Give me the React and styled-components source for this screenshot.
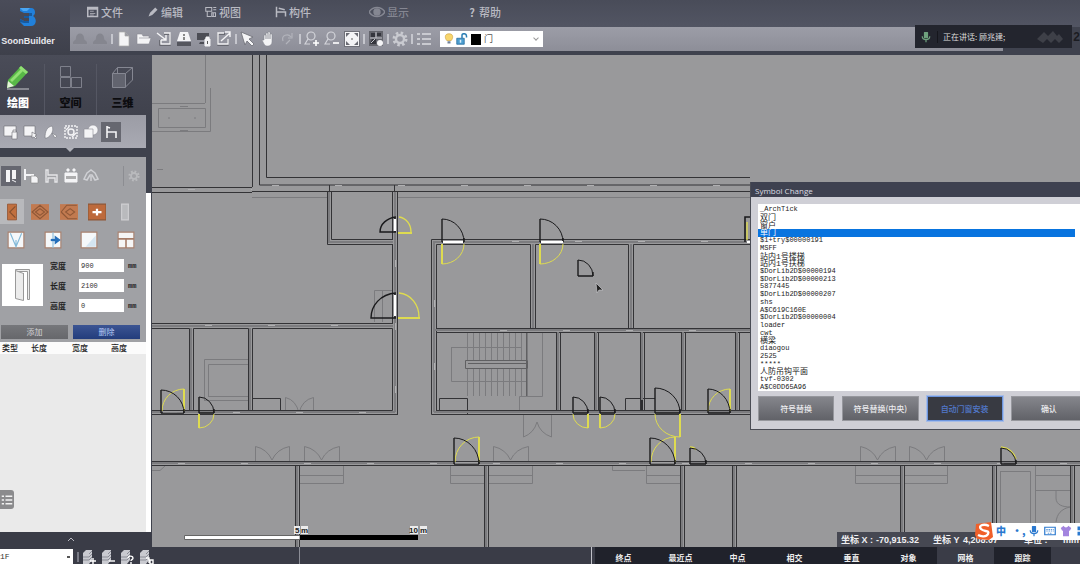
import styled, { createGlobalStyle } from "styled-components";

const cjk = `"Noto Sans CJK SC", sans-serif`;

const GlobalStyle = createGlobalStyle`
  * {
    box-sizing: border-box;
  }

  body {
    margin: 0;
    overflow: hidden;
    background: #3a3c47;
    font-family: "Liberation Sans", ${cjk};
  }

  button, input, select {
    margin: 0;
    padding: 0;
    border: 0;
    border-radius: 0;
    background: none;
    color: inherit;
    font: inherit;
  }
`;

const white = "#f4f4f6";
const edge = "#6b6c74";

/* every glyph is drawn on a 16 x 16 grid */
const glyphs = {
  undo: <path d="M1 12c0-3 3-2 3-5 0-6 8-6 8 0 0 3 3 2 3 5v1H1z" fill="#85868f" />,
  file: <path d="M3 1h6l4 4v10H3zM9 1v4h4" fill={white} stroke="#aaa" strokeWidth=".7" />,
  folder: <path d="M1 13V3h5l1 2h6v2h2l-2 6zM3 7h10" fill={white} stroke="#8b8c94" strokeWidth=".6" />,
  importIn: (
    <g fill="none" stroke={white} strokeWidth="1.4">
      <path d="M8 3h6v11H4V9" stroke="#5b5c64" />
      <path d="M8 2h6v11H5V9M1 2l9 7M10 4v5H5" />
    </g>
  ),
  scan: (
    <g>
      <path d="M4 1h8l3 9H1z" fill={white} />
      <path d="M1 11h14v4H1z" fill="#55565e" />
      <path d="M7 3h2v2H7zM7 6h2v3H7z" fill="#888" />
    </g>
  ),
  screenLock: (
    <g>
      <path d="M1 2h12v7H1z" fill="#4c4d55" />
      <path d="M4 11h4v2H3z" fill="#4c4d55" />
      <path d="M9 8h5v7H9zM10 8V6h3v2" fill={white} stroke={white} />
      <path d="M11 10h1v3h-1z" fill="#555" />
    </g>
  ),
  exportOut: (
    <g fill="none" stroke={white} strokeWidth="1.4">
      <path d="M9 3H2v11h10V8" stroke="#5b5c64" />
      <path d="M8 2H2v11h10V8M5 10l9-8M9 1h5v5" />
    </g>
  ),
  pointer: <path d="M1 1l12 5-4 2 5 5-2 2-5-5-2 4z" fill={white} stroke={edge} strokeWidth=".8" />,
  hand: (
    <path d="M4 9V4h2v4V2h2v6V1h2v7V3h2v8c0 5-7 5-8 2L2 9z" fill={white} stroke="#83848c" strokeWidth=".5" />
  ),
  rotate: (
    <g fill="none" stroke="#b2b3bb" strokeWidth="1.2">
      <path d="M3 10c-2-6 5-8 8-4M12 2v5H8M6 13l4-4" />
    </g>
  ),
  zoomIn: (
    <g fill="none" stroke="#d3d4da" strokeWidth="1.2">
      <circle cx="7" cy="5" r="4" />
      <path d="M4 8l-3 5h5" />
      <path d="M12 9v6M9 12h6" stroke="#fff" strokeWidth="1.6" />
    </g>
  ),
  zoomOut: (
    <g fill="none" stroke="#d3d4da" strokeWidth="1.2">
      <circle cx="7" cy="5" r="4" />
      <path d="M4 8l-3 5h5" />
      <path d="M9 12h6" stroke="#fff" strokeWidth="1.6" />
    </g>
  ),
  fit: (
    <g>
      <path d="M0 0h16v16H0z" fill="#707179" />
      <path d="M1 1h14v14H1z" fill={white} />
      <path d="M2 2h4L2 6zM14 2v4l-4-4zM2 14v-4l4 4zM14 14h-4l4-4z" fill="#6a6b73" />
      <path d="M7 7h2v2H7z" fill="#aaa" />
    </g>
  ),
  snapGrid: (
    <g>
      <path d="M1 0h14v15H1z" fill="#62636b" />
      <path d="M3 2h4v4H3zM9 2h4v3H9zM4 8h4v5H2z" fill="#34353d" />
      <path d="M2 7h12M8 1v6M3 12l4-4" stroke="#c4c5cc" />
      <circle cx="12" cy="12" r="3" fill={white} />
    </g>
  ),
  gear: (
    <g>
      <circle cx="8" cy="8" r="6" fill="none" stroke="currentColor" strokeWidth="3" strokeDasharray="2.4 2.3" />
      <circle cx="8" cy="8" r="4" fill="none" stroke="currentColor" strokeWidth="2.4" />
    </g>
  ),
  list: (
    <g stroke="currentColor" strokeWidth="2">
      <path d="M6 3h9M6 8h9M6 13h9M1 3h3M1 8h3M1 13h3" />
    </g>
  ),
  menuFile: (
    <g fill="none" stroke="currentColor">
      <path d="M1 2h13v12H1zM1 4h13" strokeWidth="2" />
      <path d="M4 7h5M4 10h7M4 12h5" />
    </g>
  ),
  menuEdit: <path d="M2 14l2-5 7-7 3 3-7 7zM8 10l5 4" fill="currentColor" />,
  menuView: (
    <g fill="none" stroke="currentColor" strokeWidth="1.4">
      <path d="M1 2h8v5H1zM11 2h4M11 5h4M3 7v7h5M9 9h5v5H9zM11 9v5" />
    </g>
  ),
  menuPart: <path d="M2 1v14M2 8h12v6M5 3l8 2" fill="none" stroke="currentColor" strokeWidth="2" />,
  eye: (
    <g fill="none" stroke="currentColor" strokeWidth="1.4">
      <path d="M0 8c4-6 12-6 16 0-4 6-12 6-16 0z" />
      <circle cx="8" cy="8" r="3" fill="currentColor" />
    </g>
  ),
  wallAdd: (
    <g fill={white} stroke={edge} strokeWidth=".6">
      <path d="M1 2h12v10H1z" />
      <path d="M9 8h5v7H9zM10 8V6h3v2" />
    </g>
  ),
  wallPick: (
    <g fill={white} stroke={edge} strokeWidth=".6">
      <path d="M1 2h11v10H1z" />
      <path d="M9 8l5 3-2 1 2 2-1 1-2-2-2 1z" />
    </g>
  ),
  leaf: (
    <g fill={white} stroke="#77787f" strokeWidth=".6">
      <path d="M2 14C2 7 4 3 9 2c2 4 0 9-5 12z" />
      <path d="M9 9l5 3-2 2z" />
    </g>
  ),
  hatch: (
    <g fill="none" stroke={white} strokeWidth="1.4">
      <path d="M2 2h12v12H2z" strokeDasharray="2 1" />
      <circle cx="8" cy="8" r="3" />
      <path d="M3 6l3-3M9 13l4-4" />
    </g>
  ),
  merge: (
    <g fill={white} stroke="#8b8c94" strokeWidth=".6">
      <circle cx="10" cy="6" r="5" />
      <path d="M1 5h9v9H1z" />
    </g>
  ),
  chair: <path d="M4 2v12M4 8h9v6M7 4l-3-1" fill="none" stroke={white} strokeWidth="1.6" />,
  chairCopy: (
    <g>
      <path d="M2 1v11M2 7h9" fill="none" stroke={white} strokeWidth="2" />
      <path d="M8 8h5l2 2v5H8z" fill={white} stroke="#888" strokeWidth=".6" />
    </g>
  ),
  chairLine: (
    <g fill="none" stroke="#e5e5e8" strokeWidth="1.4">
      <path d="M3 2v12h2v-4h7v4h2V7H5V2z" />
    </g>
  ),
  doors: (
    <g>
      <path d="M3 2h4v12H3z" fill={white} />
      <path d="M9 2h4v9H9z" fill={white} />
      <path d="M9 12l4 2" stroke={white} />
    </g>
  ),
  machine: (
    <g>
      <path d="M2 5h12v9H2zM4 1h2v2H4zM10 1h2v2h-2z" fill={white} stroke={white} />
      <path d="M4 8v3M6 8v3M8 8v3M10 8v3M12 8v3" stroke="#666" />
    </g>
  ),
  arcRail: (
    <g fill="none" stroke="#cfd0d4" strokeWidth="1.5">
      <path d="M1 11l3-6 4-3 4 3 3 6-3 1-3-5H7l-3 5zM8 8v5" />
    </g>
  ),
  doorLeaf: (
    <g>
      <path d="M4 1h8v14H4z" fill="#c1703f" stroke="#915330" strokeWidth=".7" />
      <path d="M11 3L6 8l5 5" fill="none" stroke="#85502f" />
    </g>
  ),
  doorSquare: (
    <g>
      <path d="M0 1h16v14H0z" fill="#c27a50" />
      <path d="M1 8l7-6 7 6-7 6zM4 8l4-3 4 3-4 3z" fill="none" stroke="#8f5736" />
    </g>
  ),
  doorSlide: (
    <g>
      <path d="M0 1h16v14H0z" fill="#c27a50" />
      <path d="M1 8l5-6h9M1 8l6 6h8M5 8l4-3 4 3-4 3z" fill="none" stroke="#8f5736" />
    </g>
  ),
  doorPlus: (
    <g>
      <path d="M0 1h16v14H0z" fill="#bd6a3c" stroke="#8f5736" />
      <path d="M8 5v6M4 8h8" stroke="#fff" strokeWidth="2" />
    </g>
  ),
  column: <path d="M5 1h6v14H5z" fill="#b9babd" stroke="#cfcfd2" />,
  winV: (
    <g>
      <path d="M1 1h14v14H1z" fill="#f5f8fa" stroke="#a98270" />
      <path d="M3 2l5 12 5-12M8 14V8" fill="none" stroke="#83b9d8" />
    </g>
  ),
  winPlus: (
    <g>
      <path d="M1 1h14v14H1z" fill="#f5f8fa" stroke="#a98270" />
      <path d="M8 1v14" stroke="#8abedb" />
      <path d="M10 5v6l4-3z" fill="#256fba" stroke="#256fba" />
      <path d="M6 8h6" stroke="#256fba" strokeWidth="2" />
    </g>
  ),
  winPlain: (
    <g>
      <path d="M1 1h14v14H1z" fill="#f5f8fa" stroke="#a98270" />
      <path d="M14 4v10H5z" fill="#d4e5f1" />
    </g>
  ),
  winPanes: (
    <g>
      <path d="M1 1h14v14H1z" fill="#f5f5f5" stroke="#a98270" />
      <path d="M1 7h14M8 7v8" stroke="#a57c68" strokeWidth="1.4" />
    </g>
  ),
  bulb: (
    <g>
      <path d="M8 1c7 0 5 7 3 9H5C3 8 1 1 8 1z" fill="#f8d66d" stroke="#c79b36" strokeWidth=".8" />
      <path d="M6 11h4v3H6z" fill="#70809a" />
    </g>
  ),
  unlock: (
    <g>
      <path d="M1 7h10v8H1z" fill="#4d9ed0" stroke="#23699b" />
      <path d="M8 7V3c0-3 6-3 6 1v2" fill="none" stroke="#2d7fb5" strokeWidth="2" />
      <path d="M5 9h2v4H5z" fill="#d9eefa" />
    </g>
  ),
  mic: (
    <g fill="none" stroke="currentColor" strokeWidth="1.6">
      <path d="M6 2h4v7H6z" fill="currentColor" strokeLinejoin="round" />
      <path d="M3 7c0 6 10 6 10 0M8 12v3" />
    </g>
  ),
  keyboard: (
    <g>
      <path d="M1 3h14v10H1z" fill="none" stroke="#2b79cf" strokeWidth="1.6" />
      <path d="M3 6h10M3 8h10M5 11h6" stroke="#2b79cf" strokeDasharray="2 1" />
    </g>
  ),
  shirt: <path d="M1 4l4-3c1 3 5 3 6 0l4 3-2 4-1-1v8H4V7L3 8z" fill="#a384df" />,
  apps: <path d="M2 2h5v5H2zM9 2h5v5H9zM2 9h5v5H2zM9 9h5v5H9z" fill="#2b79cf" />,
};

const floorMarks = {
  add: <path d="M12 9v6M9 12h6" />,
  remove: <path d="M9 12h6" />,
  ask: <path d="M9 9c1-3 5-2 5 0s-2 1-2 3M12 13v2" />,
  copy: <path d="M8 9h3v5M12 11h3v4h-3z" />,
};

const Icon = ({ name, size = 16 }) => (
  <svg width={size} height={size} viewBox="0 0 16 16" aria-hidden="true">
    {glyphs[name]}
  </svg>
);

const FloorIcon = ({ mark }) => (
  <svg width="16" height="16" viewBox="0 0 16 16" aria-hidden="true">
    <path d="M2 4l3-3h6v10l-3 4H2z" fill="#c9cad0" />
    <path d="M8 5l3-3M2 8h6l3-3M2 11h6l3-3" fill="none" stroke="#8b8d96" />
    <g fill="none" stroke="#fff" strokeWidth="1.4">{floorMarks[mark]}</g>
  </svg>
);

const menus = [
  ["menuFile", "文件"],
  ["menuEdit", "编辑"],
  ["menuView", "视图"],
  ["menuPart", "构件"],
  ["eye", "显示"],
  [null, "帮助"],
];

const toolGroups = [
  ["undo", "undo"],
  ["file", "folder", "importIn", "scan", "screenLock", "exportOut"],
  ["pointer", "hand", "rotate"],
  ["zoomIn", "zoomOut", "fit"],
  ["snapGrid"],
  ["gear"],
  ["list"],
];

const symbols = [
  "_ArchTick", "双门", "窗户", "单门", "$1+try$00000191", "MSFF", "站内1号楼梯", "站内1号扶梯",
  "$DorLib2D$00000194", "$DorLib2D$00000213", "5877445", "$DorLib2D$00000207", "shs",
  "A$C619C160E", "$DorLib2D$00000004", "loader", "cwt", "横梁", "diaogou", "2525", "*****",
  "人防吊钩平面", "tvf-0302", "A$C0DD65A96",
];

const snaps = ["终点", "最近点", "中点", "相交", "垂直", "对象", "网格", "跟踪"];

/* hinge x, top y, closing x, base y */
const blackDoors = [
  [161, 390, 184, 413], [199, 397, 214, 413], [442, 219, 464, 242], [540, 219, 563, 242],
  [578, 260, 593, 276], [573, 397, 588, 413], [600, 397, 615, 413], [655, 388, 680, 413],
  [708, 389, 730, 413], [454, 438, 479, 464], [650, 438, 675, 464], [690, 448, 706, 464],
  [1001, 448, 1016, 464],
];

const yellowDoors = [
  [184, 389, 162, 411], [199, 428, 214, 414], [442, 264, 464, 244], [540, 264, 563, 244],
  [588, 428, 573, 414], [600, 428, 615, 414], [680, 437, 655, 414], [730, 389, 708, 411],
  [479, 437, 455, 462], [675, 437, 651, 462],
];

const swing = ([x, top, closeX, base]) => {
  const clockwise = (closeX > x) === (base > top) ? 1 : 0;
  return `M${x} ${top}A${Math.abs(closeX - x)} ${Math.abs(base - top)} 0 0 ${clockwise} ${closeX} ${base}`;
};

const doubleDoors = [[255, 289], [304, 339], [493, 528], [860, 895], [909, 944]];

const steps = [[450, 484], [488, 532], [299, 343], [646, 680], [855, 900], [904, 947]];

const lowerWalls = [[295, 299], [484, 488], [680, 684], [732, 736], [900, 904], [992, 996], [1070, 1074]];

const roomWalls = [[556, 560], [594, 598], [640, 644], [681, 685], [735, 739]];

const Plan = () => (
  <PlanSvg viewBox="152 55 928 492" preserveAspectRatio="xMinYMin slice" role="img" aria-label="平面图">
    <g fill="none" stroke="#7b7b7e" strokeWidth="1">
      <path d="M205.500 55V103M152 103.500H205M158.500 108.500H205.500V127.500H158.500zM210.500 88V131.500H152M168 118h2M194 118h2M157 169.500h6M180 106.500h8M180 130.500h8" />
      <path d="M252 197.500H327M398 197.500H750M204.500 400V359.500H248M208.500 396V364.500H248M204 400.500H248M208 396.500H248" />
      <path d="M374.500 322V290.500H393M382.500 290V322M451.500 347.500H522M451.500 347V381.500H526M542.500 333V396.500H519.500V412" />
      <path d="M465.500 360.500H527.500V368.500H465.500zM468 363.500H526M526.500 333V396" stroke="#606062" />
      {Array.from({ length: 11 }, (_, i) => (
        <path key={i} d={`M${467.5 + i * 6} 333V360M${467.5 + i * 6} 369V396`} />
      ))}
      <path d="M285.500 413V397.500Q296 400 299 413Q302 400 313.500 397.500V413M523.500 415V437Q534 433 537 422Q540 433 551.500 437V415" />
      {doubleDoors.map(([a, b]) => {
        const mid = (a + b) / 2;
        return (
          <path key={a} d={`M${a}.500 462V446.500Q${mid - 5} 449 ${mid} 460Q${mid + 5} 449 ${b}.500 446.500V462`} />
        );
      })}
      {steps.map(([a, b]) => (
        <path key={a} d={`M${a} 475.500H${b}M${a}.500 466V483.500H${b}.500V466`} />
      ))}
      <path d="M612.500 466V470.500H645M1000.500 471.500H1030.500V523M1000.500 471V523M1035.500 466V540M1035 475.500H1070M1035 490.500H1070M1056 490V498C1056 505 1063 507 1070 507C1061 509 1057 514 1056 522M152 470.500H160L165 466" />
    </g>

    <g fill="none" stroke="#333336" strokeWidth="1">
      <path d="M252.500 55V187M259.500 55V185H750M266.500 55V177.500H750M252 191.500H750M152 187.500H252M152 192.500H252" />
      <path d="M329.500 185V192M394.500 185V192M327.500 192V244.500H393M331.500 192V239.500H393M392.500 192V239M392.500 244V323M397.500 192V414.500" />
      <path d="M152 323.500H393M152 328.500H189.500V410M193.500 410V328.500H248.500V410M252.500 410V328.500H392.500V410.500H152M152 414.500H398M252 398.500H280.500V410" />
      <path d="M750 239.500H431.500V414.500H750M436.500 410V244.500H530.500V328M535.500 328V244.500H628.500V328M633.500 328V244.500H750M436 328.500H750M436 332.500H750M436 410.500H750" />
      {roomWalls.map(([a, b]) => (
        <path key={a} d={`M${a}.500 332V410M${b}.500 332V410`} />
      ))}
      <path d="M439.500 410V398.500H467.500V414M625.500 410V398.500H655M152 461.500H1080M152 465.500H1080" />
      {lowerWalls.map(([a, b]) => (
        <path key={a} d={`M${a}.500 466V547M${b}.500 466V547`} />
      ))}
    </g>

    <g fill="none" stroke="#7c7c7f" strokeWidth="2">
      <path d="M329 192V242H393M395 192V412M152 326H393M191 328V410M250 328V410M152 412H395M434 412V242H750M434 330H750M434 412H750M533 244V328M631 244V328M152 463H1080" />
      {roomWalls.map(([a]) => (
        <path key={a} d={`M${a + 2} 332V410`} />
      ))}
      {lowerWalls.map(([a]) => (
        <path key={a} d={`M${a + 2} 466V547`} />
      ))}
    </g>
    <g fill="none" stroke="#b0b0b2" strokeWidth="1" strokeDasharray="7 56">
      <path d="M188 189.500H252M272 185.500H750M205 325.500H392M170 412.500H392M512 241.500H750M500 330.500H750M178 463.500H1080M395.500 260V410M434.500 300V410" />
    </g>

    <g fill="none" stroke="#dedb50">
      {yellowDoors.map((door) => (
        <g key={door.join()}>
          <path d={swing(door)} strokeWidth="1" />
          <path d={`M${door[0]} ${door[1]}V${door[3]}`} strokeWidth="2" />
        </g>
      ))}
      <path d="M399 217C406 218 411 224 411 232M399 293C411 294 419 305 419 317M747 222V240" strokeWidth="1.400" />
      <path d="M398 233H412M398 318H420" strokeWidth="2" />
      <path d="M690 447C693 447 695 448 696 450M1001 447C1009 448 1014 453 1016 459" strokeWidth="1.400" />
    </g>

    <g fill="none" stroke="#1a1a1c">
      {blackDoors.map((door) => (
        <g key={door.join()}>
          <path d={swing(door)} strokeWidth="1" />
          <path d={`M${door[0]} ${door[1]}V${door[3]}`} strokeWidth="1.400" />
          <path d={`M${door[0]} ${door[3]}H${door[2]}M${door[2]} ${door[3] - 4}v4`} strokeWidth="1.400" />
        </g>
      ))}
      <path d="M396 217C387 218 380 224 380 232H396M396 293C380 294 371 306 371 318H396M395 217V232M395 293V318" strokeWidth="1.400" />
      <path d="M750 217H745V242M642 400V410" strokeWidth="1.600" />
    </g>
    <g stroke="#fff" strokeWidth="2">
      <path d="M443 242H463M541 242H563M395 219V231M395 295V316M747 242H750" />
      <path d="M163 412H183M455 463H478M651 463H674" stroke="#c4c4c6" strokeWidth="1" />
    </g>
    <path d="M596 283l7 7-4 0-2 3z" fill="#222" stroke="#c6c6c8" strokeWidth=".7" />
    <g>
      <path d="M184.500 535.500H300V539.500H184.500z" fill="#fff" stroke="#666" />
      <path d="M300 535H418V540H300z" />
      <path d="M294 526h6v8h-6zM301 526h7v8h-7zM410 526h8v8h-8zM420 526h7v8h-7z" fill="#ececec" />
      <g fontFamily="Liberation Sans" fontSize="8" fontWeight="700" fill="#222">
        <text x="295" y="533">5</text>
        <text x="301" y="533">m</text>
        <text x="409" y="533">10</text>
        <text x="420" y="533">m</text>
      </g>
    </g>
  </PlanSvg>
);

const Header = () => (
  <HeaderBar>
    <Brand>
      <svg width="18" height="20" viewBox="0 0 18 20" aria-hidden="true">
        <path d="M1 1h11c5 0 5 7 2 8 4 2 4 10-2 10H5l-4-4v-3l4 2h5v-3H5V9h5V6H5L1 4z" fill="#2180da" />
        <path d="M1 12l4 2h5v2H5l-4-1zM5 9h5v2H5zM10 6h3v3h-3z" fill="#175a9f" />
        <path d="M1 1h10L8 4H4z" fill="#4ba6f2" />
      </svg>
      <BrandName>SoonBuilder</BrandName>
    </Brand>
    <HeaderMain>
      <MenuBar>
        {menus.map(([icon, label]) => (
          <MenuButton key={label} $dim={icon === "eye"}>
            {icon ? <Icon name={icon} size={icon === "eye" ? 16 : 12} /> : <HelpMark>?</HelpMark>}
            {label}
          </MenuButton>
        ))}
      </MenuBar>
      <ToolBar>
        {toolGroups.map((group, i) => (
          <ToolGroup key={i}>
            {group.map((name, j) => (
              <ToolButton key={j} aria-label={name}>
                <Icon name={name} />
              </ToolButton>
            ))}
          </ToolGroup>
        ))}
        <LayerBox>
          <Icon name="bulb" size={12} />
          <Icon name="unlock" size={12} />
          <Swatch />
          <LayerSelect aria-label="图层">
            <option>门</option>
          </LayerSelect>
          <Chevron />
        </LayerBox>
      </ToolBar>
      <Speaker>
        <Mic><Icon name="mic" size={12} /></Mic>
        正在讲话: 顾兆建;
        <svg width="28" height="14" viewBox="0 0 28 14" aria-hidden="true">
          <path d="M1 9l7-7 4 4 5-5 4 5 2-2 4 5-4 4-4-4-4 4-4-4-4 4z" fill="#3e4048" />
        </svg>
      </Speaker>
      <Count>2</Count>
    </HeaderMain>
  </HeaderBar>
);

const Modes = () => (
  <ModeBar>
    <ModeButton $active>
      <svg width="26" height="26" viewBox="0 0 26 26" aria-hidden="true">
        <path d="M3 16L16 2l7 6-13 14-8 2z" fill="#58b847" />
        <path d="M5 16L17 4l2 2L7 18zM16 2l7 6-2 2-7-6z" fill="#91df73" />
        <path d="M3 17l6 5-7 2z" fill="#e5f3d9" />
        <path d="M2 25h22" stroke="#c9cacf" />
      </svg>
      绘图
    </ModeButton>
    <ModeButton>
      <svg width="26" height="26" viewBox="0 0 26 26" fill="none" stroke="#7e808b" aria-hidden="true">
        <path d="M2.500 2.500h10v10h-10zM2.500 13.500h10v10h-10zM13.500 13.500h10v10h-10z" />
      </svg>
      空间
    </ModeButton>
    <ModeButton>
      <svg width="26" height="26" viewBox="0 0 26 26" aria-hidden="true">
        <path d="M2.500 9.500h13v14h-13z" fill="#62646f" stroke="#858792" />
        <path d="M7.500 9V3.500h15V16l-7 7M15.500 9.500l7-6M2.500 9.500l5-6" fill="none" stroke="#858792" />
      </svg>
      三维
    </ModeButton>
  </ModeBar>
);

const SidePanel = () => (
  <Side>
    <Modes />
    <ToolStrip>
      {["wallAdd", "wallPick", "leaf", "hatch", "merge", "chair"].map((name) => (
        <StripButton key={name} $active={name === "chair"} aria-label={name}>
          <Icon name={name} />
        </StripButton>
      ))}
    </ToolStrip>
    <SideBody>
      <Column>
        <Properties>
          <KindRow>
            {["doors", "chairCopy", "chairLine", "machine", "arcRail"].map((name) => (
              <StripButton key={name} $active={name === "doors"} aria-label={name}>
                <Icon name={name} />
              </StripButton>
            ))}
            <GearButton aria-label="设置"><Icon name="gear" size={12} /></GearButton>
          </KindRow>
          <DoorRow>
            {["doorLeaf", "doorSquare", "doorSlide", "doorPlus", "column"].map((name) => (
              <DoorButton key={name} $active={name === "doorLeaf"} aria-label={name}>
                <Icon name={name} size={18} />
              </DoorButton>
            ))}
          </DoorRow>
          <WindowRow>
            {["winV", "winPlus", "winPlain", "winPanes"].map((name) => (
              <DoorButton key={name} aria-label={name}>
                <Icon name={name} size={18} />
              </DoorButton>
            ))}
          </WindowRow>
          <SizeForm>
            <Preview>
              <svg width="20" height="34" viewBox="0 0 20 34" fill="#ececec" stroke="#999" aria-hidden="true">
                <path d="M2.500 1.500h14v30h-2V3.500h-12z" />
                <path d="M2.500 2.500l8 3v27l-8-2zM10.500 5v25" />
              </svg>
            </Preview>
            <Fields>
              {[["宽度", "900"], ["长度", "2100"], ["高度", "0"]].map(([label, value]) => (
                <Field key={label}>
                  <FieldName>{label}</FieldName>
                  <FieldInput defaultValue={value} />
                  <Unit>mm</Unit>
                </Field>
              ))}
            </Fields>
          </SizeForm>
          <ActionRow>
            <ActionButton>添加</ActionButton>
            <ActionButton $primary>删除</ActionButton>
          </ActionRow>
        </Properties>
        <SizeTable>
          <thead>
            <tr>
              <HeadCell $w="29px">类型</HeadCell>
              <HeadCell $w="41px">长度</HeadCell>
              <HeadCell $w="39px">宽度</HeadCell>
              <HeadCell>高度</HeadCell>
            </tr>
          </thead>
        </SizeTable>
        <EmptyList>
          <DrawerButton aria-label="列表"><Icon name="list" size={12} /></DrawerButton>
        </EmptyList>
      </Column>
      <ScrollTrack />
    </SideBody>
    <Collapse aria-label="收起">
      <svg width="8" height="5" viewBox="0 0 8 5" fill="none" stroke="#b9bac2" aria-hidden="true">
        <path d="M1 4l3-3 3 3" />
      </svg>
    </Collapse>
  </Side>
);

const SymbolDialog = () => (
  <Dialog role="dialog" aria-label="Symbol Change">
    <DialogTitle>Symbol Change</DialogTitle>
    <DialogBody>
      <SymbolList role="listbox" aria-label="Symbol">
        {symbols.map((name) => (
          <SymbolRow
            key={name}
            role="option"
            aria-selected={name === "单门"}
            $selected={name === "单门"}
            $large={/[\u4e00-\u9fff]/.test(name)}
          >
            {name}
          </SymbolRow>
        ))}
      </SymbolList>
      <DialogActions>
        <DialogButton>符号替换</DialogButton>
        <DialogButton>符号替换(中央)</DialogButton>
        <DialogButton $focused>自动门窗安装</DialogButton>
        <DialogButton>确认</DialogButton>
      </DialogActions>
    </DialogBody>
  </Dialog>
);

const App = () => (
  <Page>
    <GlobalStyle />
    <Header />
    <Workspace>
      <SidePanel />
      <Canvas>
        <Plan />
        <SymbolDialog />
        <Coordinates>
          <span>坐标 X :</span>
          <span>-70,915.32</span>
          <span>坐标 Y</span>
          <span>4,208.07</span>
          <span>单位 :</span>
          <span>mm</span>
        </Coordinates>
        <InputBar>
          <svg width="20" height="20" viewBox="0 0 20 20" aria-hidden="true">
            <path d="M2 3l15-2 2 15-4 3-12-1-2-4z" fill="#f0602a" />
            <path d="M15 5C9 2 4 5 7 8s9 1 7 5-8 2-10 1" fill="none" stroke="#fff" strokeWidth="2.400" />
          </svg>
          <InputKeys>
            <b>中</b>
            <b>•,</b>
            <Icon name="mic" size={12} />
            <Icon name="keyboard" size={12} />
            <Icon name="shirt" size={12} />
            <Icon name="apps" size={12} />
          </InputKeys>
        </InputBar>
      </Canvas>
    </Workspace>
    <StatusBar>
      <FloorTools>
        <FloorSelect aria-label="楼层">
          <option>1F</option>
        </FloorSelect>
        <Divider />
        {Object.keys(floorMarks).map((mark) => (
          <FloorButton key={mark} aria-label={mark}><FloorIcon mark={mark} /></FloorButton>
        ))}
      </FloorTools>
      <Message />
      <SnapBar>
        {snaps.map((name) => (
          <SnapButton key={name} $on={name === "网格"}>{name}</SnapButton>
        ))}
      </SnapBar>
    </StatusBar>
  </Page>
);

export default App;

const Page = styled.div`
  display: flex;
  flex-direction: column;
  height: 100vh;
  overflow: hidden;
`;

const HeaderBar = styled.header`
  display: flex;
  flex: none;
  height: 55px;
  background: #3f424e;
`;

const Brand = styled.div`
  display: flex;
  flex-direction: column;
  align-items: center;
  width: 70px;
  padding: 7px 14px 0 0;
  background: linear-gradient(#4a4c59, #3e404b);
`;

const BrandName = styled.span`
  margin-top: 8px;
  color: #e9e9ed;
  font: 700 9px/12px "Liberation Sans", sans-serif;
`;

const HeaderMain = styled.div`
  position: relative;
  display: flex;
  flex: 1;
  flex-direction: column;
`;

const MenuBar = styled.nav`
  display: grid;
  grid-template-columns: 60px 58px 70px 94px 98px auto;
  justify-content: start;
  height: 27px;
  padding: 0 0 4px 17px;
  background: linear-gradient(#494c59, #525563);
`;

const MenuButton = styled.button`
  display: flex;
  align-items: center;
  gap: 2px;
  color: ${({ $dim }) => ($dim ? "#858792" : "#b9bac2")};
  font: 500 11px/16px ${cjk};
`;

const HelpMark = styled.span`
  width: 10px;
  font-weight: 700;
`;

const ToolBar = styled.div`
  display: flex;
  align-items: center;
  height: 24px;
  margin-right: 77px;
  background: linear-gradient(#9c9da7, #8d8e98);
`;

const ToolGroup = styled.div`
  display: flex;

  & + &::before {
    content: "";
    width: 2px;
    height: 10px;
    margin: 3px 1px;
    background: #c5c6cd;
  }
`;

const ToolButton = styled.button`
  display: grid;
  place-items: center;
  width: 20px;
  height: 16px;
  color: #c9cad0;
`;

const LayerBox = styled.div`
  display: flex;
  align-items: center;
  gap: 1px;
  width: 103px;
  height: 16px;
  margin-left: 6px;
  padding: 0 5px 0 3px;
  background: #fff;
`;

const Swatch = styled.span`
  width: 10px;
  height: 11px;
  margin: 0 2px;
  background: #000;
`;

const LayerSelect = styled.select`
  flex: 1;
  appearance: none;
  color: #555;
  font: 9px/16px ${cjk};
`;

const Chevron = styled.span`
  width: 4px;
  height: 4px;
  margin-bottom: 2px;
  border: solid #999;
  border-width: 0 1px 1px 0;
  transform: rotate(45deg);
`;

const Speaker = styled.div`
  position: absolute;
  top: 25px;
  right: 8px;
  display: flex;
  align-items: center;
  gap: 5px;
  width: 157px;
  height: 23px;
  padding: 0 8px 0 5px;
  background: #23252e;
  color: #ddd;
  font: 8px/12px ${cjk};

  > svg {
    margin-left: auto;
  }
`;

const Mic = styled.span`
  display: flex;
  padding-right: 5px;
  border-right: 1px solid #15161c;
  color: #6fa27e;
`;

const Count = styled.span`
  position: absolute;
  top: 30px;
  right: 0;
  color: #1b1c22;
  font: 700 12px/14px "Liberation Sans", sans-serif;
`;

const Workspace = styled.main`
  display: flex;
  flex: 1;
  min-height: 0;
`;

const Side = styled.aside`
  display: flex;
  flex: none;
  flex-direction: column;
  width: 152px;
  background: #3f424d;
`;

const ModeBar = styled.nav`
  display: flex;
  height: 60px;
  margin-left: -8px;
  padding-top: 9px;
  overflow: hidden;
  background: linear-gradient(#4a4c58, #40424d);
`;

const ModeButton = styled.button`
  display: flex;
  flex-direction: column;
  align-items: center;
  gap: 4px;
  width: 52px;
  color: ${({ $active }) => ($active ? "#fff" : "#0c0c0f")};
  font: 900 11px/16px ${cjk};

  & + & {
    border-left: 1px solid #555763;
  }
`;

const ToolStrip = styled.div`
  position: relative;
  display: flex;
  align-items: center;
  height: 33px;
  margin: 0 6px 9px 0;
  padding-left: 1px;
  background: linear-gradient(#9b9ca5, #a9aab3);

  &::after {
    content: "";
    position: absolute;
    top: 33px;
    left: 66px;
    border: solid transparent;
    border-width: 4px 4px 0;
    border-top-color: #b0b1b9;
  }
`;

const StripButton = styled.button`
  display: grid;
  place-items: center;
  width: 20px;
  height: 20px;
  background: ${({ $active }) => ($active ? "#666770" : "none")};
`;

const SideBody = styled.div`
  display: flex;
  flex: 1;
  min-height: 0;
`;

const Column = styled.div`
  display: flex;
  flex: 1;
  flex-direction: column;
`;

const ScrollTrack = styled.div`
  width: 5px;
  margin: 36px 1px 0 0;
  background: #fff;
`;

const Properties = styled.section`
  height: 185px;
  padding-top: 9px;
  background: #a0a1a5;
`;

const KindRow = styled.div`
  display: flex;
  padding-left: 1px;
`;

const GearButton = styled.button`
  display: grid;
  flex: 1;
  place-items: center;
  margin: 0 2px 0 22px;
  border-left: 1px solid #8c8d92;
  color: #b9babd;
`;

const DoorRow = styled.div`
  display: grid;
  grid-template-columns: repeat(5, 24px);
  justify-content: space-between;
  margin: 13px 9px 0 0;
`;

const DoorButton = styled.button`
  display: grid;
  place-items: center;
  height: 25px;
  background: ${({ $active }) => ($active ? "#b8b9bc" : "none")};
`;

const WindowRow = styled.div`
  display: grid;
  grid-template-columns: repeat(4, 24px);
  justify-content: space-between;
  margin: 3px 8px 0 4px;
`;

const SizeForm = styled.div`
  display: flex;
  gap: 7px;
  padding: 7px 2px 0;
`;

const Preview = styled.div`
  display: grid;
  place-items: center;
  width: 41px;
  height: 42px;
  margin-top: 5px;
  background: #fff;
`;

const Fields = styled.div`
  display: grid;
  gap: 7px;
`;

const Field = styled.label`
  display: flex;
  align-items: center;
  height: 13px;
  font: 700 8px/12px ${cjk};
`;

const FieldName = styled.span`
  width: 29px;
  color: #222;
`;

const FieldInput = styled.input`
  width: 45px;
  height: 13px;
  padding-left: 2px;
  background: #fff;
  color: #333;
  font: 7px/12px "Liberation Mono", monospace;
`;

const Unit = styled.span`
  margin-left: 4px;
  color: #222;
  font: 700 7px/12px "Liberation Mono", monospace;
`;

const ActionRow = styled.div`
  display: grid;
  grid-template-columns: 1fr 1fr;
  gap: 5px;
  margin: 13px 6px 0 1px;
`;

const ActionButton = styled.button`
  height: 14px;
  background: ${({ $primary }) => ($primary ? "linear-gradient(#3c5593, #233d7c)" : "linear-gradient(#76777b, #66676b)")};
  color: ${({ $primary }) => ($primary ? "#b8cdf8" : "#d2d2d5")};
  font: 8px/12px ${cjk};
`;

const SizeTable = styled.table`
  width: 100%;
  border-collapse: collapse;
  table-layout: fixed;
  background: #fbfbfb;
`;

const HeadCell = styled.th`
  width: ${({ $w }) => $w || "auto"};
  padding: 0 0 0 2px;
  color: #222;
  font: 500 8px/12px ${cjk};
  text-align: left;
`;

const EmptyList = styled.div`
  position: relative;
  flex: 1;
  background: #eaeaea;
`;

const DrawerButton = styled.button`
  position: absolute;
  bottom: 23px;
  left: 0;
  display: grid;
  place-items: center;
  width: 14px;
  height: 19px;
  border-radius: 0 3px 3px 0;
  background: #8b8b8d;
  color: #f2f2f2;
`;

const Collapse = styled.button`
  display: grid;
  place-items: center;
  height: 15px;
  padding-right: 10px;
  background: #3a3c47;
`;

const Canvas = styled.section`
  position: relative;
  flex: 1;
  overflow: hidden;
  background: #99999b;
`;

const PlanSvg = styled.svg`
  display: block;
  width: 100%;
  height: 100%;
`;

const Dialog = styled.div`
  position: absolute;
  top: 127px;
  right: -14px;
  width: 344px;
  border: solid #4a4c55;
  border-width: 0 1px 1px;
  background: #cfcfd6;
`;

const DialogTitle = styled.h2`
  margin: 0;
  padding: 3px 4px 0;
  background: #3e4150;
  color: #dcdde2;
  font: 8px/12px "Open Sans", sans-serif;
`;

const DialogBody = styled.div`
  padding: 7px 6px 8px 7px;
`;

const SymbolList = styled.div`
  display: grid;
  grid-template-rows: repeat(24, 1fr);
  height: 187px;
  margin-right: 12px;
  padding: 2px 0 0;
  background: #fff;
  box-shadow: 12px 0 #fff;
`;

const SymbolRow = styled.div`
  display: flex;
  align-items: center;
  min-height: 0;
  padding-left: 2px;
  background: ${({ $selected }) => ($selected ? "#0874df" : "none")};
  color: ${({ $selected }) => ($selected ? "#fff" : "#222")};
  font: ${({ $large }) => ($large ? "8px" : "7px")}/7px "Liberation Mono", ${cjk};
`;

const DialogActions = styled.div`
  display: grid;
  grid-template-columns: repeat(4, 1fr);
  gap: 8px;
  margin-top: 5px;
`;

const DialogButton = styled.button`
  height: 25px;
  border: 1px solid ${({ $focused }) => ($focused ? "#6c95df" : "#96979d")};
  background: ${({ $focused }) => ($focused ? "#383a42" : "linear-gradient(#85868c, #616268)")};
  box-shadow: ${({ $focused }) => ($focused ? "0 0 0 1px #a5bce8" : "none")};
  color: ${({ $focused }) => ($focused ? "#5279cc" : "#ededf0")};
  font: 500 8px/12px ${cjk};
`;

const Coordinates = styled.div`
  position: absolute;
  right: 0;
  bottom: 0;
  display: grid;
  grid-template-columns: 35px 57px 30px 61px 39px auto;
  align-items: center;
  width: 243px;
  height: 15px;
  padding-left: 4px;
  overflow: hidden;
  background: #464852;
  color: #f0f0f2;
  font: 700 9px/12px "Liberation Sans", ${cjk};
  white-space: nowrap;
`;

const InputBar = styled.div`
  position: absolute;
  right: 0;
  bottom: 6px;
  display: flex;
  align-items: center;
  width: 106px;
  height: 20px;

  > svg {
    z-index: 1;
    flex: none;
  }
`;

const InputKeys = styled.div`
  display: flex;
  align-items: center;
  gap: 4px;
  height: 17px;
  margin-left: -10px;
  padding-left: 12px;
  background: #fff;
  color: #2b79cf;
  font: 700 10px/16px ${cjk};

  > * {
    flex: none;
    width: 12px;
  }
`;

const StatusBar = styled.footer`
  display: flex;
  flex: none;
  height: 17px;
  background: #3a3c47;
`;

const FloorTools = styled.div`
  display: flex;
  width: 300px;
  padding-top: 2px;
  border-right: 1px solid #8b8d96;
`;

const FloorSelect = styled.select`
  appearance: none;
  width: 73px;
  height: 15px;
  background: linear-gradient(#555, #555) 67px 7px / 3px 2px no-repeat #fff;
  color: #333;
  font: 8px/14px "Liberation Mono", monospace;
`;

const Divider = styled.span`
  width: 2px;
  height: 10px;
  margin: 3px 2px 0 4px;
  background: #777984;
`;

const FloorButton = styled.button`
  display: flex;
  width: 19px;
`;

const Message = styled.div`
  flex: 1;
  border-right: 1px solid #c0c1c8;
`;

const SnapBar = styled.div`
  display: grid;
  grid-template-columns: repeat(8, 57px);
  padding: 0 29px 0 3px;
`;

const SnapButton = styled.button`
  padding-top: 4px;
  background: ${({ $on }) => ($on ? "#3a3c47" : "#20222b")};
  color: #eee;
  font: 700 8px/12px ${cjk};
`;
